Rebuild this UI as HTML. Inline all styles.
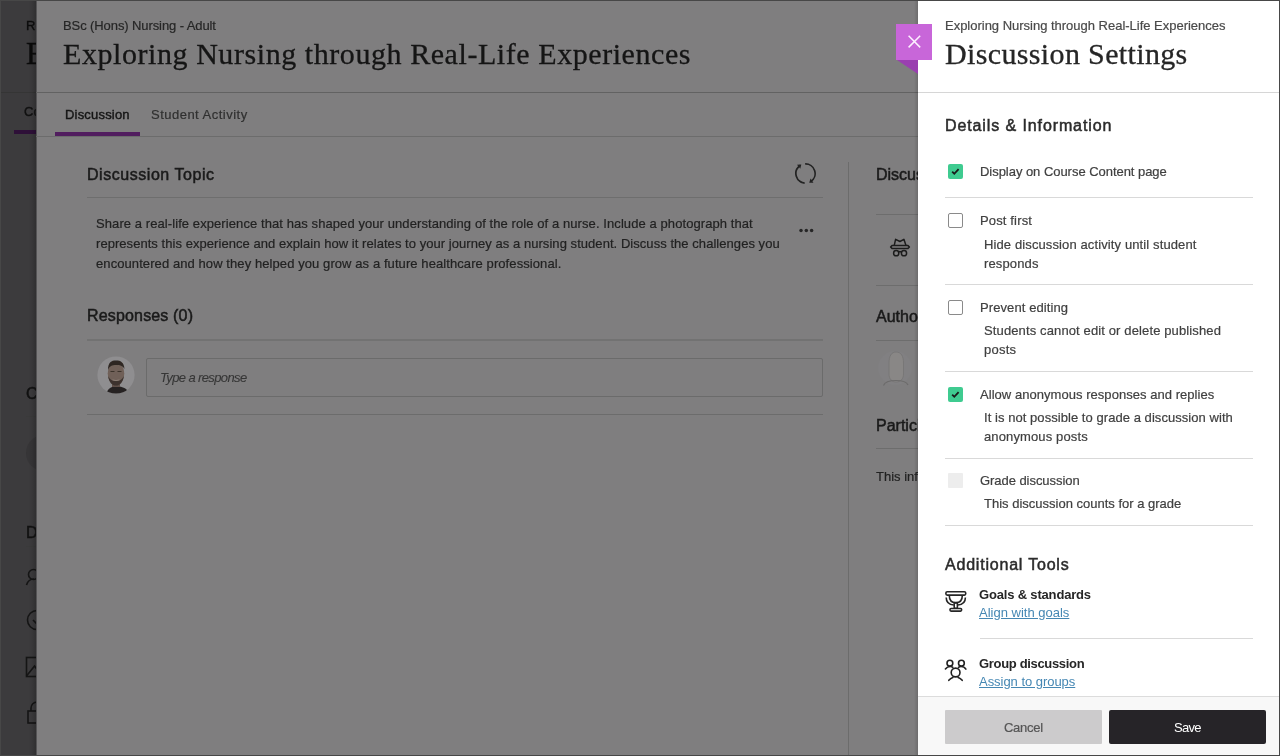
<!DOCTYPE html>
<html><head><meta charset="utf-8"><style>
html,body{margin:0;padding:0;width:1280px;height:756px;overflow:hidden;background:#3c3b3d;position:relative;font-family:"Liberation Sans", sans-serif;}
.t{position:absolute;white-space:pre;will-change:transform;}
.a{position:absolute;}

</style></head><body>
<div class=a style="left:0;top:92px;width:37px;height:1px;background:#353535;z-index:1"></div>
<div class=a style="left:14px;top:130px;width:23px;height:4px;background:#2e1038;z-index:1"></div>
<div class=a style="left:26px;top:416px;width:11px;height:1px;background:#3a3a3a;z-index:1"></div>
<div class=a style="left:26px;top:435px;width:36px;height:36px;border-radius:50%;background:#363537;z-index:1"></div>
<div class=a style="left:26px;top:546px;width:11px;height:1px;background:#3a3a3a;z-index:1"></div>
<svg class=a style="left:20px;top:560px;z-index:1" width="30" height="180" viewBox="0 0 30 180" fill="none" stroke="#151515" stroke-width="1.6">
<circle cx="13.5" cy="14.5" r="5"/><path d="M6.5 25 C8 20 11 19 14 19"/>
<circle cx="17" cy="60" r="9.5"/><path d="M13 60 l3 3 l5 -6"/>
<rect x="6.5" y="97.5" width="20" height="19"/><path d="M6.5 116 l8 -10 l6 8"/>
<path d="M11 151 v-3 a6 6 0 0 1 12 0"/><rect x="8" y="151" width="16" height="12"/>
</svg>
<div class=a style="left:28px;top:0;width:8px;height:756px;background:linear-gradient(to right,rgba(0,0,0,0),rgba(0,0,0,0.06) 50%,rgba(0,0,0,0.2));z-index:1"></div>
<div class=a style="left:37px;top:0;width:881px;height:756px;background:#7f7e7f;z-index:2"></div>
<div class=a style="left:36px;top:0;width:1px;height:756px;background:#555456;z-index:2"></div>
<div class=a style="left:36px;top:92px;width:882px;height:1px;background:#626262;z-index:3"></div>
<div class=a style="left:36px;top:136px;width:882px;height:1px;background:#6c6c6c;z-index:3"></div>
<div class=a style="left:55px;top:132px;width:85px;height:4px;background:#511d5f;z-index:3"></div>
<div class=a style="left:87px;top:197px;width:736px;height:1px;background:#6e6e6e;z-index:3"></div>
<div class=a style="left:87px;top:339px;width:736px;height:2px;background:#727272;z-index:3"></div>
<div class=a style="left:87px;top:414px;width:736px;height:1px;background:#6c6c6c;z-index:3"></div>
<div class=a style="left:146px;top:358px;width:675px;height:37px;border:1px solid #6b6b6b;border-radius:2px;z-index:3"></div>
<div class=a style="left:848px;top:162px;width:1px;height:594px;background:#6c6c6c;z-index:3"></div>
<div class=a style="left:876px;top:214px;width:42px;height:1px;background:#6d6d6d;z-index:3"></div>
<div class=a style="left:876px;top:285px;width:42px;height:1px;background:#6d6d6d;z-index:3"></div>
<div class=a style="left:876px;top:340px;width:42px;height:1px;background:#6d6d6d;z-index:3"></div>
<div class=a style="left:876px;top:448px;width:42px;height:1px;background:#6d6d6d;z-index:3"></div>
<div class=a style="left:914px;top:0;width:4px;height:756px;background:linear-gradient(to right,rgba(0,0,0,0),rgba(0,0,0,0.14));z-index:4"></div>
<svg class=a style="left:793px;top:161px;z-index:3" width="25" height="25" viewBox="0 0 25 25">
<path d="M11.66 22.06 A9.6 9.6 0 0 1 6.59 4.94 M12.16 2.91 A9.6 9.6 0 0 1 18.01 20.36" fill="none" stroke="#232323" stroke-width="1.7"/>
<g fill="#232323"><polygon points="8.32,3.58 4.04,3.63 7.24,7.72"/><polygon points="16.20,21.63 20.48,21.81 17.50,17.55"/></g>
</svg>
<svg class=a style="left:797px;top:226px;z-index:3" width="20" height="8" viewBox="0 0 20 8" fill="#262626">
<circle cx="4" cy="4.5" r="1.75"/><circle cx="9.3" cy="4.5" r="1.75"/><circle cx="14.6" cy="4.5" r="1.75"/></svg>
<svg class=a style="left:97px;top:356px;z-index:3" width="38" height="38" viewBox="0 0 38 38">
<defs><clipPath id="av"><circle cx="19" cy="19" r="18.6"/></clipPath>
<filter id="bl" x="-20%" y="-20%" width="140%" height="140%"><feGaussianBlur stdDeviation="0.7"/></filter></defs>
<circle cx="19" cy="19" r="18.6" fill="#8f8e90"/>
<g clip-path="url(#av)"><g filter="url(#bl)">
<path d="M9 40 C10 33 13 30.5 19 30.5 C26 30.5 31 32 33 40 Z" fill="#262423"/>
<path d="M15 27 L15 31 L23 31 L23 27 Z" fill="#5e5049"/>
<ellipse cx="19" cy="17.5" rx="8.3" ry="11.2" fill="#6f6058"/>
<path d="M11 14 C11 6 14.5 4.5 19 4.5 C23.5 4.5 27 6 27.5 13 C25.5 9.5 23 9 19 9 C15 9 12.5 10 11 14Z" fill="#2e2723"/>
<path d="M11.2 20 C12 27 15.5 29.5 19 29.5 C22.5 29.5 26 27 26.8 20 C25 24 22.5 25 19 25 C15.5 25 13 24 11.2 20Z" fill="#3d332e"/>
<path d="M15.5 23.8 Q19 25.5 22.5 23.8" stroke="#8a7c74" stroke-width="1" fill="none"/>
<path d="M13.5 15.5 h4 M20.5 15.5 h4" stroke="#3a302b" stroke-width="1.2"/>
</g></g></svg>
<svg class=a style="left:889px;top:237px;z-index:3" width="22" height="20" viewBox="0 0 22 20" fill="none" stroke="#1c1c1c" stroke-width="1.5" stroke-linejoin="round">
<path d="M5.3 8.2 L6.6 2.3 L10.9 4.5 L14.9 2.3 L16.9 8.2"/>
<path d="M3 8.6 L19 8.6 L20.4 10 L19 11.4 L3 11.4 L1.6 10 Z"/>
<circle cx="7.2" cy="16.2" r="2.6"/><circle cx="15" cy="16.2" r="2.6"/><path d="M9.6 15.2 Q10.9 13.9 12.4 15.2"/>
</svg>
<svg class=a style="left:877px;top:350px;z-index:3" width="36" height="38" viewBox="0 0 36 38">
<circle cx="18" cy="18" r="17" fill="#818082"/>
<path d="M12 13 C12 6 14.5 2 19 2 C24 2 26.5 6 26.5 13 L26.5 24 C26.5 29 23.5 32 19 32 C15 32 12 29 12 24 Z" fill="#898786" stroke="#757373" stroke-width="0.8"/>
<path d="M6.5 35.5 C8 31.5 13 30.5 19 30.5 C25 30.5 29.5 31.5 31 35" fill="none" stroke="#6c6b6b" stroke-width="1.2"/>

</svg>
<div class=a style="left:918px;top:0;width:362px;height:756px;background:#ffffff;z-index:5"></div>
<div class=a style="left:918px;top:92px;width:362px;height:1px;background:#d6d6d6;z-index:6"></div>
<svg class=a style="left:896px;top:24px;z-index:7" width="36" height="52" viewBox="0 0 36 52">
<polygon points="1,36 22,36 22,50" fill="#9a3fb0"/>
<rect x="0" y="0" width="36" height="36" fill="#c866d9"/>
<path d="M12.6 11.8 L24.2 23.4 M24.2 11.8 L12.6 23.4" stroke="#fdf0ff" stroke-width="1.5"/>
</svg>
<div class=a style="left:945px;top:197px;width:308px;height:1px;background:#d9d9d9;z-index:6"></div>
<div class=a style="left:945px;top:284px;width:308px;height:1px;background:#d9d9d9;z-index:6"></div>
<div class=a style="left:945px;top:371px;width:308px;height:1px;background:#d9d9d9;z-index:6"></div>
<div class=a style="left:945px;top:458px;width:308px;height:1px;background:#d9d9d9;z-index:6"></div>
<div class=a style="left:945px;top:525px;width:308px;height:1px;background:#d9d9d9;z-index:6"></div>
<div class=a style="left:980px;top:638px;width:273px;height:1px;background:#d9d9d9;z-index:6"></div>
<svg class=a style="left:948px;top:164px;z-index:6" width="15" height="15" viewBox="0 0 15 15">
<rect x="0" y="0" width="15" height="15" rx="2" fill="#3fcb90"/>
<path d="M4.2 7.6 L6.3 9.8 L10.6 5.2" stroke="#1a1a1a" stroke-width="1.8" fill="none"/></svg>
<div class=a style="left:948px;top:213px;width:13px;height:13px;border:1px solid #8a8a8a;border-radius:2px;z-index:6"></div>
<div class=a style="left:948px;top:300px;width:13px;height:13px;border:1px solid #8a8a8a;border-radius:2px;z-index:6"></div>
<svg class=a style="left:948px;top:387px;z-index:6" width="15" height="15" viewBox="0 0 15 15">
<rect x="0" y="0" width="15" height="15" rx="2" fill="#3fcb90"/>
<path d="M4.2 7.6 L6.3 9.8 L10.6 5.2" stroke="#1a1a1a" stroke-width="1.8" fill="none"/></svg>
<div class=a style="left:948px;top:473px;width:15px;height:15px;border-radius:1px;background:#ededed;z-index:6"></div>
<svg class=a style="left:944px;top:589px;z-index:6" width="24" height="24" viewBox="0 0 24 24" fill="none" stroke="#262626" stroke-width="1.6" stroke-linejoin="round">
<rect x="1.9" y="2.8" width="19.8" height="3.3" rx="1.3"/>
<path d="M5.3 6.4 C5.3 11 8 13.6 11.8 13.6 C15.6 13.6 18.3 11 18.3 6.4"/>
<path d="M2.2 8.4 C2.2 13 5.5 15.6 9.8 16"/><path d="M21.4 8.4 C21.4 13 18.1 15.6 13.8 16"/>
<rect x="10.2" y="14" width="3.2" height="5.2" rx="0.6"/>
<rect x="6" y="19.5" width="11.6" height="2.6" rx="1"/>
</svg>
<svg class=a style="left:944px;top:658px;z-index:6" width="24" height="25" viewBox="0 0 24 25" fill="none" stroke="#222" stroke-width="1.6" stroke-linecap="round">
<circle cx="5.9" cy="5.2" r="2.9"/><circle cx="17.4" cy="5.2" r="2.9"/>
<path d="M1.4 10.9 C2.6 9.3 4.3 8.5 6.3 8.5 C7.3 8.5 8.2 8.8 8.8 9.4"/><path d="M21.9 11.1 C20.8 9.3 19 8.5 17 8.5 C16 8.5 15.1 8.8 14.5 9.4"/>
<circle cx="11.6" cy="14.5" r="4.4"/>
<path d="M4.8 22.3 C6 20.8 7.2 19.9 8.8 19.4"/><path d="M18.2 22.3 C17 20.8 15.8 19.9 14.2 19.4"/>
</svg>
<div class=a style="left:918px;top:696px;width:362px;height:60px;background:#f8f8f8;border-top:1px solid #dcdcdc;z-index:6"></div>
<div class=a style="left:945px;top:710px;width:157px;height:34px;background:#cccbcc;border-radius:1px;z-index:6"></div>
<div class=a style="left:1109px;top:710px;width:157px;height:34px;background:#262428;border-radius:2px;z-index:6"></div>
<div class=a style="left:0;top:0;width:1278px;height:754px;border:1px solid #474747;z-index:10"></div>

<div class=t style="left:26.4px;top:17.00px;line-height:18px;font-size:13px;font-family:'Liberation Sans', sans-serif;font-weight:400;font-style:normal;color:#0c0c0c;-webkit-text-stroke:0.35px #0c0c0c;z-index:1;">Rc</div>
<div class=t style="left:25.9px;top:32.00px;line-height:43px;font-size:31px;font-family:'Liberation Serif', serif;font-weight:400;font-style:normal;color:#0a0a0a;-webkit-text-stroke:0.35px #0a0a0a;z-index:1;">Ex</div>
<div class=t style="left:24.4px;top:103.00px;line-height:18px;font-size:13px;font-family:'Liberation Sans', sans-serif;font-weight:400;font-style:normal;color:#111111;-webkit-text-stroke:0.4px #111111;z-index:1;">Co</div>
<div class=t style="left:25.9px;top:383.00px;line-height:22px;font-size:16px;font-family:'Liberation Sans', sans-serif;font-weight:400;font-style:normal;color:#111111;-webkit-text-stroke:0.5px #111111;z-index:1;">Co</div>
<div class=t style="left:25.9px;top:522.00px;line-height:22px;font-size:16px;font-family:'Liberation Sans', sans-serif;font-weight:400;font-style:normal;color:#111111;-webkit-text-stroke:0.5px #111111;z-index:1;">De</div>
<div class=t style="left:63.4px;top:17.00px;line-height:18px;font-size:13px;font-family:'Liberation Sans', sans-serif;font-weight:400;font-style:normal;color:#262626;-webkit-text-stroke:0.2px #262626;z-index:3;letter-spacing:-0.094px;">BSc (Hons) Nursing - Adult</div>
<div class=t style="left:62.9px;top:33.00px;line-height:42px;font-size:30px;font-family:'Liberation Serif', serif;font-weight:400;font-style:normal;color:#151515;-webkit-text-stroke:0.3px #151515;z-index:3;letter-spacing:0.565px;">Exploring Nursing through Real-Life Experiences</div>
<div class=t style="left:65.0px;top:106.00px;line-height:18px;font-size:13px;font-family:'Liberation Sans', sans-serif;font-weight:400;font-style:normal;color:#151515;-webkit-text-stroke:0.4px #151515;z-index:3;letter-spacing:0.193px;">Discussion</div>
<div class=t style="left:150.6px;top:106.00px;line-height:18px;font-size:13px;font-family:'Liberation Sans', sans-serif;font-weight:400;font-style:normal;color:#303030;-webkit-text-stroke:0.2px #303030;z-index:3;letter-spacing:0.487px;">Student Activity</div>
<div class=t style="left:86.7px;top:164.00px;line-height:22px;font-size:16px;font-family:'Liberation Sans', sans-serif;font-weight:400;font-style:normal;color:#1a1a1a;-webkit-text-stroke:0.5px #1a1a1a;z-index:3;letter-spacing:0.542px;">Discussion Topic</div>
<div class=t style="left:95.9px;top:215.00px;line-height:18px;font-size:13px;font-family:'Liberation Sans', sans-serif;font-weight:400;font-style:normal;color:#222222;-webkit-text-stroke:0.2px #222222;z-index:3;letter-spacing:0.082px;">Share a real-life experience that has shaped your understanding of the role of a nurse. Include a photograph that</div>
<div class=t style="left:95.9px;top:235.00px;line-height:18px;font-size:13px;font-family:'Liberation Sans', sans-serif;font-weight:400;font-style:normal;color:#222222;-webkit-text-stroke:0.2px #222222;z-index:3;letter-spacing:0.050px;">represents this experience and explain how it relates to your journey as a nursing student. Discuss the challenges you</div>
<div class=t style="left:95.9px;top:255.00px;line-height:18px;font-size:13px;font-family:'Liberation Sans', sans-serif;font-weight:400;font-style:normal;color:#222222;-webkit-text-stroke:0.2px #222222;z-index:3;letter-spacing:0.084px;">encountered and how they helped you grow as a future healthcare professional.</div>
<div class=t style="left:86.7px;top:305.00px;line-height:22px;font-size:16px;font-family:'Liberation Sans', sans-serif;font-weight:400;font-style:normal;color:#1a1a1a;-webkit-text-stroke:0.5px #1a1a1a;z-index:3;letter-spacing:0.163px;">Responses (0)</div>
<div class=t style="left:160.0px;top:369.00px;line-height:18px;font-size:13px;font-family:'Liberation Sans', sans-serif;font-weight:400;font-style:italic;color:#363636;-webkit-text-stroke:0.1px #363636;z-index:3;letter-spacing:-0.620px;">Type a response</div>
<div class=t style="left:876.4px;top:164.00px;line-height:22px;font-size:16px;font-family:'Liberation Sans', sans-serif;font-weight:400;font-style:normal;color:#1a1a1a;-webkit-text-stroke:0.5px #1a1a1a;z-index:3;">Discussion</div>
<div class=t style="left:875.6px;top:306.00px;line-height:22px;font-size:16px;font-family:'Liberation Sans', sans-serif;font-weight:400;font-style:normal;color:#1a1a1a;-webkit-text-stroke:0.5px #1a1a1a;z-index:3;">Author</div>
<div class=t style="left:875.9px;top:415.00px;line-height:22px;font-size:16px;font-family:'Liberation Sans', sans-serif;font-weight:400;font-style:normal;color:#1a1a1a;-webkit-text-stroke:0.5px #1a1a1a;z-index:3;">Participation</div>
<div class=t style="left:875.9px;top:468.00px;line-height:18px;font-size:13px;font-family:'Liberation Sans', sans-serif;font-weight:400;font-style:normal;color:#222222;-webkit-text-stroke:0.2px #222222;z-index:3;">This information</div>
<div class=t style="left:944.6px;top:17.00px;line-height:18px;font-size:13px;font-family:'Liberation Sans', sans-serif;font-weight:400;font-style:normal;color:#4a4a4a;-webkit-text-stroke:0.2px #4a4a4a;z-index:6;letter-spacing:-0.013px;">Exploring Nursing through Real-Life Experiences</div>
<div class=t style="left:944.9px;top:33.00px;line-height:42px;font-size:30px;font-family:'Liberation Serif', serif;font-weight:400;font-style:normal;color:#262626;-webkit-text-stroke:0.3px #262626;z-index:6;letter-spacing:0.358px;">Discussion Settings</div>
<div class=t style="left:945.0px;top:115.00px;line-height:22px;font-size:16px;font-family:'Liberation Sans', sans-serif;font-weight:400;font-style:normal;color:#2b2b2b;-webkit-text-stroke:0.5px #2b2b2b;z-index:6;letter-spacing:0.894px;">Details &amp; Information</div>
<div class=t style="left:980.0px;top:163.00px;line-height:18px;font-size:13px;font-family:'Liberation Sans', sans-serif;font-weight:400;font-style:normal;color:#404040;-webkit-text-stroke:0.2px #404040;z-index:6;letter-spacing:-0.038px;">Display on Course Content page</div>
<div class=t style="left:980.0px;top:212.00px;line-height:18px;font-size:13px;font-family:'Liberation Sans', sans-serif;font-weight:400;font-style:normal;color:#404040;-webkit-text-stroke:0.2px #404040;z-index:6;letter-spacing:0.147px;">Post first</div>
<div class=t style="left:984.0px;top:236.00px;line-height:18px;font-size:13px;font-family:'Liberation Sans', sans-serif;font-weight:400;font-style:normal;color:#404040;-webkit-text-stroke:0.2px #404040;z-index:6;letter-spacing:0.116px;">Hide discussion activity until student</div>
<div class=t style="left:984.0px;top:255.00px;line-height:18px;font-size:13px;font-family:'Liberation Sans', sans-serif;font-weight:400;font-style:normal;color:#404040;-webkit-text-stroke:0.2px #404040;z-index:6;letter-spacing:0.145px;">responds</div>
<div class=t style="left:980.0px;top:299.00px;line-height:18px;font-size:13px;font-family:'Liberation Sans', sans-serif;font-weight:400;font-style:normal;color:#404040;-webkit-text-stroke:0.2px #404040;z-index:6;letter-spacing:0.098px;">Prevent editing</div>
<div class=t style="left:984.0px;top:322.00px;line-height:18px;font-size:13px;font-family:'Liberation Sans', sans-serif;font-weight:400;font-style:normal;color:#404040;-webkit-text-stroke:0.2px #404040;z-index:6;letter-spacing:0.125px;">Students cannot edit or delete published</div>
<div class=t style="left:984.0px;top:341.00px;line-height:18px;font-size:13px;font-family:'Liberation Sans', sans-serif;font-weight:400;font-style:normal;color:#404040;-webkit-text-stroke:0.2px #404040;z-index:6;letter-spacing:0.230px;">posts</div>
<div class=t style="left:980.0px;top:386.00px;line-height:18px;font-size:13px;font-family:'Liberation Sans', sans-serif;font-weight:400;font-style:normal;color:#404040;-webkit-text-stroke:0.2px #404040;z-index:6;letter-spacing:0.042px;">Allow anonymous responses and replies</div>
<div class=t style="left:984.0px;top:409.00px;line-height:18px;font-size:13px;font-family:'Liberation Sans', sans-serif;font-weight:400;font-style:normal;color:#404040;-webkit-text-stroke:0.2px #404040;z-index:6;letter-spacing:0.054px;">It is not possible to grade a discussion with</div>
<div class=t style="left:984.0px;top:428.00px;line-height:18px;font-size:13px;font-family:'Liberation Sans', sans-serif;font-weight:400;font-style:normal;color:#404040;-webkit-text-stroke:0.2px #404040;z-index:6;letter-spacing:0.128px;">anonymous posts</div>
<div class=t style="left:980.0px;top:472.00px;line-height:18px;font-size:13px;font-family:'Liberation Sans', sans-serif;font-weight:400;font-style:normal;color:#404040;-webkit-text-stroke:0.2px #404040;z-index:6;letter-spacing:-0.050px;">Grade discussion</div>
<div class=t style="left:984.0px;top:495.00px;line-height:18px;font-size:13px;font-family:'Liberation Sans', sans-serif;font-weight:400;font-style:normal;color:#404040;-webkit-text-stroke:0.2px #404040;z-index:6;">This discussion counts for a grade</div>
<div class=t style="left:944.7px;top:554.00px;line-height:22px;font-size:16px;font-family:'Liberation Sans', sans-serif;font-weight:400;font-style:normal;color:#2b2b2b;-webkit-text-stroke:0.5px #2b2b2b;z-index:6;letter-spacing:0.795px;">Additional Tools</div>
<div class=t style="left:978.7px;top:586.00px;line-height:18px;font-size:13px;font-family:'Liberation Sans', sans-serif;font-weight:700;font-style:normal;color:#262626;z-index:6;letter-spacing:-0.173px;">Goals &amp; standards</div>
<div class=t style="left:978.7px;top:604.00px;line-height:18px;font-size:13px;font-family:'Liberation Sans', sans-serif;font-weight:400;font-style:normal;color:#4587b3;z-index:6;text-decoration:underline;">Align with goals</div>
<div class=t style="left:978.7px;top:655.00px;line-height:18px;font-size:13px;font-family:'Liberation Sans', sans-serif;font-weight:700;font-style:normal;color:#262626;z-index:6;letter-spacing:-0.328px;">Group discussion</div>
<div class=t style="left:978.7px;top:673.00px;line-height:18px;font-size:13px;font-family:'Liberation Sans', sans-serif;font-weight:400;font-style:normal;color:#4587b3;z-index:6;letter-spacing:-0.036px;text-decoration:underline;">Assign to groups</div>
<div class=t style="left:1003.8px;top:719.00px;line-height:18px;font-size:13px;font-family:'Liberation Sans', sans-serif;font-weight:400;font-style:normal;color:#555555;-webkit-text-stroke:0.2px #555555;z-index:6;letter-spacing:-0.274px;">Cancel</div>
<div class=t style="left:1173.6px;top:719.00px;line-height:18px;font-size:13px;font-family:'Liberation Sans', sans-serif;font-weight:400;font-style:normal;color:#ffffff;z-index:6;letter-spacing:-0.747px;">Save</div>
</body></html>
